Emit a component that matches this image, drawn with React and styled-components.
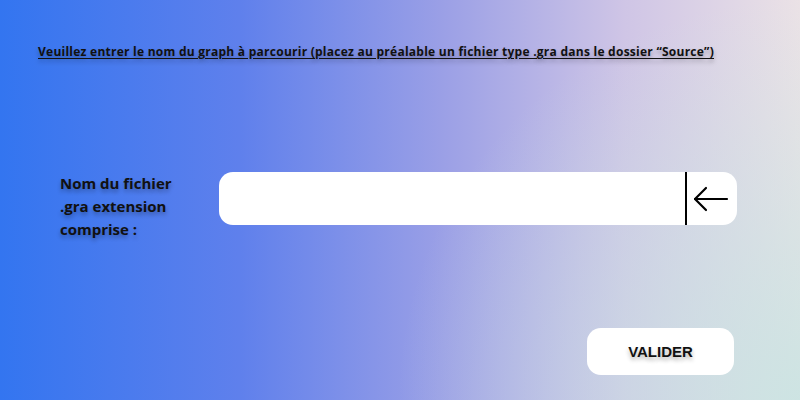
import React, { useState } from 'react';
import styled, { createGlobalStyle } from 'styled-components';

const GlobalStyle = createGlobalStyle`
  html, body {
    margin: 0;
    padding: 0;
  }
  body {
    font-family: "Open Sans", "Noto Sans", sans-serif;
  }
`;

const Page = styled.div`
  width: 800px;
  height: 400px;
  box-sizing: border-box;
  padding: 44px 63px 25px 38px;
  display: flex;
  flex-direction: column;
  background:
    radial-gradient(circle at 100% 100%, rgba(200, 228, 226, 0.85) 0%, rgba(200, 228, 226, 0) 45%),
    linear-gradient(90deg, #3375f0 0%, #5f80ec 30%, #9a9fe6 55%, #cfc5e6 78%, #ebe2e6 100%);
`;

const Title = styled.h1`
  margin: 0;
  font-size: 12px;
  font-weight: 700;
  line-height: 15px;
  letter-spacing: 0.25px;
  color: #111;
  text-decoration: underline;
  text-underline-offset: 2px;
  text-shadow: 0 3px 4px rgba(0, 0, 0, 0.3);
`;

const Row = styled.div`
  display: flex;
  align-items: flex-start;
  margin-top: 113px;
  padding-left: 22px;
`;

const Label = styled.label`
  width: 159px;
  font-size: 15px;
  font-weight: 700;
  line-height: 23px;
  color: #111;
  text-shadow: 0 3px 4px rgba(0, 0, 0, 0.3);
`;

const Field = styled.div`
  flex: 1;
  height: 53px;
  display: flex;
  background: #fff;
  border-radius: 14px;
  overflow: hidden;
`;

const Input = styled.input`
  flex: 1;
  min-width: 0;
  border: none;
  outline: none;
  background: transparent;
  padding: 0 16px;
  font-size: 15px;
  font-family: "Open Sans", sans-serif;
`;

const BackButton = styled.button`
  width: 52px;
  border: none;
  border-left: 2px solid #000;
  background: transparent;
  padding: 0 0 0 6px;
  display: flex;
  align-items: center;
  cursor: pointer;
`;

const Footer = styled.div`
  margin-top: auto;
  padding-right: 3px;
  display: flex;
  justify-content: flex-end;
`;

const Submit = styled.button`
  width: 147px;
  height: 47px;
  border: none;
  border-radius: 14px;
  background: #fff;
  font-family: "Liberation Sans", Arial, sans-serif;
  font-size: 15px;
  font-weight: 700;
  color: #111;
  text-shadow: 0 3px 4px rgba(0, 0, 0, 0.3);
  cursor: pointer;
`;

const ArrowIcon = () => (
  <svg width="36" height="26" viewBox="0 0 36 26" fill="none" stroke="#000" strokeWidth="2.2" strokeLinecap="round" strokeLinejoin="round">
    <path d="M2 13 H34" />
    <path d="M13 2 L2 13 L13 24" />
  </svg>
);

export default function App() {
  const [name, setName] = useState('');

  return (
    <>
      <GlobalStyle />
      <Page>
        <Title>Veuillez entrer le nom du graph à parcourir (placez au préalable un fichier type .gra dans le dossier “Source”)</Title>
        <Row>
          <Label htmlFor="fichier">Nom du fichier<br />.gra extension<br />comprise :</Label>
          <Field>
            <Input id="fichier" value={name} onChange={(e) => setName(e.target.value)} />
            <BackButton type="button" onClick={() => setName('')}>
              <ArrowIcon />
            </BackButton>
          </Field>
        </Row>
        <Footer>
          <Submit type="button">VALIDER</Submit>
        </Footer>
      </Page>
    </>
  );
}
